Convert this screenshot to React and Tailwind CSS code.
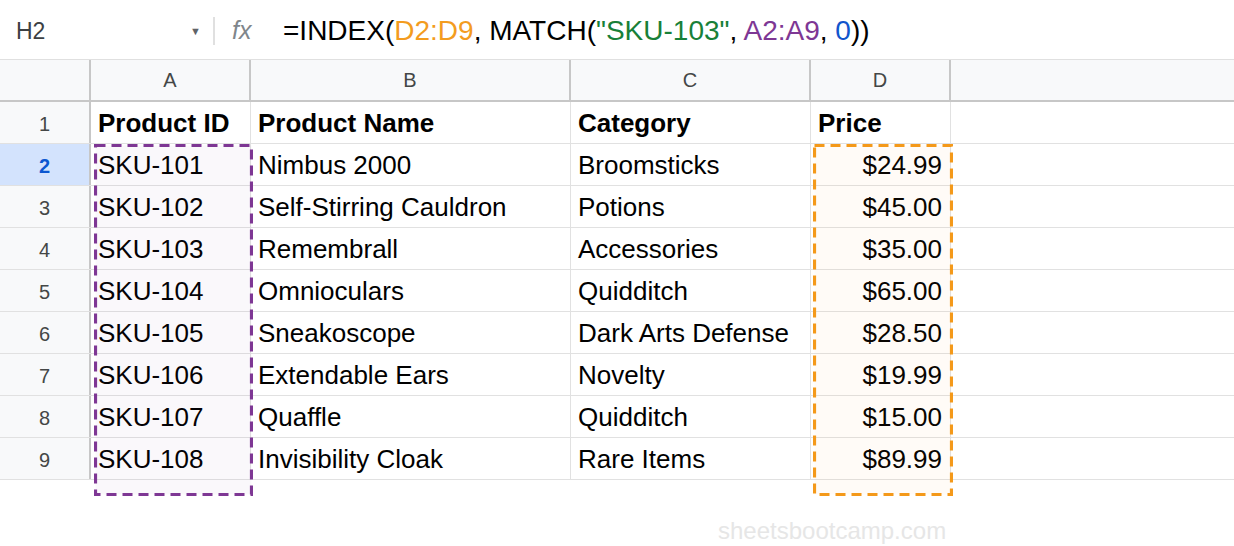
import React from "react";

const font = { fontFamily: '"Liberation Sans", Arial, sans-serif' };

const rows = [
  ["SKU-101", "Nimbus 2000", "Broomsticks", "$24.99"],
  ["SKU-102", "Self-Stirring Cauldron", "Potions", "$45.00"],
  ["SKU-103", "Remembrall", "Accessories", "$35.00"],
  ["SKU-104", "Omnioculars", "Quidditch", "$65.00"],
  ["SKU-105", "Sneakoscope", "Dark Arts Defense", "$28.50"],
  ["SKU-106", "Extendable Ears", "Novelty", "$19.99"],
  ["SKU-107", "Quaffle", "Quidditch", "$15.00"],
  ["SKU-108", "Invisibility Cloak", "Rare Items", "$89.99"],
];

function HeaderCell({ w, children }) {
  return (
    <div
      className={`${w} h-full shrink-0 border-r-2 border-[#c7c7c7] flex items-center justify-center text-[20px] text-[#444746]`}
    >
      {children}
    </div>
  );
}

function Cell({ w, children, right, bold }) {
  return (
    <div
      className={`${w} h-full shrink-0 border-r border-[#e1e1e1] flex items-center px-[7px] pt-[2px] text-[26px] text-black whitespace-nowrap overflow-hidden ${
        right ? "justify-end pr-[8px]" : ""
      } ${bold ? "font-bold" : ""}`}
    >
      {children}
    </div>
  );
}

function Box({ left, width, color }) {
  return (
    <svg
      className="absolute pointer-events-none"
      style={{ left, top: 144, width, height: 352 }}
      width={width}
      height={352}
    >
      <rect
        x="1.5"
        y="1.5"
        width={width - 3}
        height={349}
        fill={color}
        fillOpacity="0.035"
        stroke={color}
        strokeWidth="3.2"
        strokeDasharray="10 6"
      />
    </svg>
  );
}

export default function App() {
  return (
    <div className="relative w-[1234px] h-[546px] overflow-hidden bg-white" style={font}>
      {/* Formula bar */}
      <div className="h-[60px] border-b border-[#e0e0e0] flex items-center pt-[3px]">
        <div className="w-[213px] flex items-center pl-[16px] pr-[12px]">
          <span className="text-[23px] text-[#3c4043] flex-1">H2</span>
          <span className="text-[11px] text-[#5f6368]">▼</span>
        </div>
        <div className="w-[2px] h-[28px] bg-[#e0e0e0]" />
        <span className="ml-[17px] w-[51px] text-[25px] italic text-[#80868b]">fx</span>
        <span className="text-[28px] text-black whitespace-nowrap">
          =INDEX(<span className="text-[#f39c1f]">D2:D9</span>, MATCH(
          <span className="text-[#188038]">"SKU-103"</span>,{" "}
          <span className="text-[#7e3794]">A2:A9</span>,{" "}
          <span className="text-[#1155cc]">0</span>))
        </span>
      </div>

      {/* Column header */}
      <div className="h-[42px] flex bg-[#f8f9fa] border-b-2 border-[#c7c7c7]">
        <HeaderCell w="w-[91px]"></HeaderCell>
        <HeaderCell w="w-[160px]">A</HeaderCell>
        <HeaderCell w="w-[320px]">B</HeaderCell>
        <HeaderCell w="w-[240px]">C</HeaderCell>
        <HeaderCell w="w-[140px]">D</HeaderCell>
        <div className="flex-1" />
      </div>

      {/* Row 1 */}
      <div className="h-[42px] flex border-b border-[#e1e1e1]">
        <div className="w-[91px] h-full shrink-0 bg-[#f8f9fa] border-r-2 border-[#c7c7c7] flex items-center justify-center text-[20px] text-[#444746] pt-[2px]">
          1
        </div>
        <Cell w="w-[160px]" bold>Product ID</Cell>
        <Cell w="w-[320px]" bold>Product Name</Cell>
        <Cell w="w-[240px]" bold>Category</Cell>
        <Cell w="w-[140px]" bold>Price</Cell>
        <div className="flex-1" />
      </div>

      {rows.map((r, i) => {
        const selected = i === 0;
        return (
          <div key={i} className="h-[42px] flex border-b border-[#e1e1e1]">
            <div
              className={`w-[91px] h-full shrink-0 border-r-2 border-[#c7c7c7] flex items-center justify-center text-[20px] pt-[2px] ${
                selected
                  ? "bg-[#d3e3fd] text-[#0b57d0] font-bold"
                  : "bg-[#f8f9fa] text-[#444746]"
              }`}
            >
              {i + 2}
            </div>
            <Cell w="w-[160px]">{r[0]}</Cell>
            <Cell w="w-[320px]">{r[1]}</Cell>
            <Cell w="w-[240px]">{r[2]}</Cell>
            <Cell w="w-[140px]" right>{r[3]}</Cell>
            <div className="flex-1" />
          </div>
        );
      })}

      <Box left={94} width={159} color="#7e3794" />
      <Box left={813} width={140} color="#f4991a" />

      <div className="absolute left-[718px] top-[513px] text-[24px] text-[#e6e6e6] whitespace-nowrap">
        sheetsbootcamp.com
      </div>
    </div>
  );
}
